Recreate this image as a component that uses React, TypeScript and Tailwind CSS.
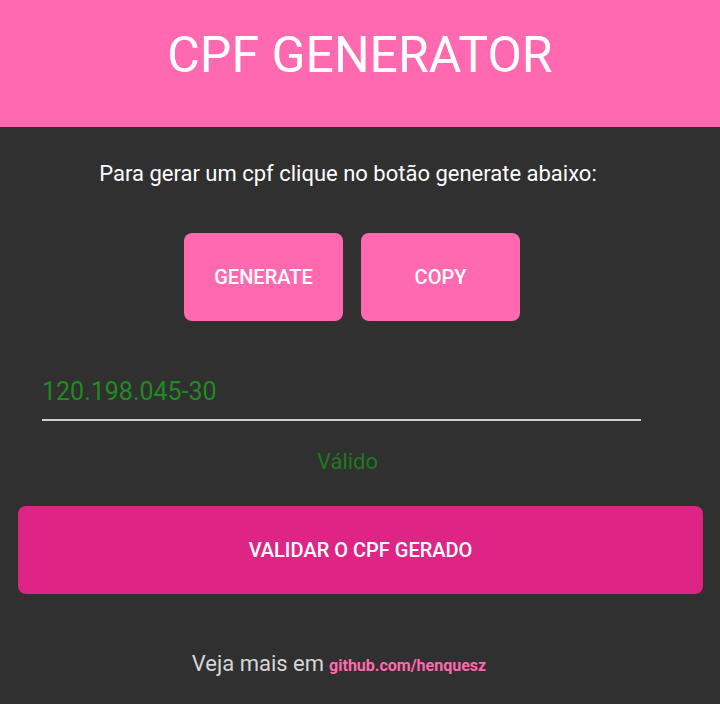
export default function App() {
  return (
    <div className="w-[720px] h-[704px] bg-[#303030] overflow-hidden" style={{ fontFamily: "Roboto, 'Noto Sans', sans-serif" }}>
      <div className="h-[127px] bg-[#ff69b0] flex items-center justify-center pb-[18px]">
        <h1 className="text-[50px] leading-none text-white font-normal">CPF GENERATOR</h1>
      </div>
      <p className="mt-[33px] text-center text-[22px] leading-[28px] text-white pr-[24px]">
        Para gerar um cpf clique no botão generate abaixo:
      </p>
      <div className="mt-[45px] flex justify-center gap-[18px] pr-[16px]">
        <button className="w-[159px] h-[88px] rounded-[8px] bg-[#ff69b0] text-white text-[20px] font-medium">GENERATE</button>
        <button className="w-[159px] h-[88px] rounded-[8px] bg-[#ff69b0] text-white text-[20px] font-medium">COPY</button>
      </div>
      <div className="mt-[55px] ml-[42px] w-[599px] pb-[11px] border-b-2 border-[#cfcfcf]">
        <span className="text-[25px] leading-[32px] text-[#208a20]">120.198.045-30</span>
      </div>
      <div className="mt-[27px] ml-[42px] w-[599px] pl-[12px] text-center text-[22px] leading-[28px] text-[#1c7a1c]">Válido</div>
      <div className="mt-[30px] px-[18px] pr-[17px]">
        <button className="w-full h-[88px] rounded-[8px] bg-[#de2585] text-white text-[20px] font-medium">VALIDAR O CPF GERADO</button>
      </div>
      <div className="mt-[56px] flex justify-center items-baseline pr-[42px] leading-[28px]">
        <span className="text-[22px] text-[#d6d6d6]">Veja mais em</span>
        <span className="ml-[5px] text-[16px] font-bold text-[#ff69b0]">github.com/henquesz</span>
      </div>
    </div>
  );
}
